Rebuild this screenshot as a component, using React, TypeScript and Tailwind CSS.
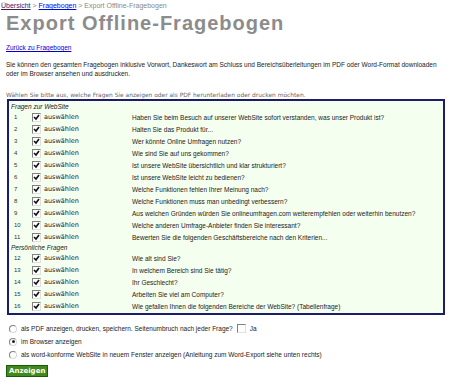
import React from "react";

const q1 = [
  "Haben Sie beim Besuch auf unserer WebSite sofort verstanden, was unser Produkt ist?",
  "Halten Sie das Produkt für...",
  "Wer könnte Online Umfragen nutzen?",
  "Wie sind Sie auf uns gekommen?",
  "Ist unsere WebSite übersichtlich und klar strukturiert?",
  "Ist unsere WebSite leicht zu bedienen?",
  "Welche Funktionen fehlen Ihrer Meinung nach?",
  "Welche Funktionen muss man unbedingt verbessern?",
  "Aus welchen Gründen würden Sie onlineumfragen.com weiterempfehlen oder weiterhin benutzen?",
  "Welche anderen Umfrage-Anbieter finden Sie interessant?",
  "Bewerten Sie die folgenden Geschäftsbereiche nach den Kriterien...",
];
const q2 = [
  "Wie alt sind Sie?",
  "In welchem Bereich sind Sie tätig?",
  "Ihr Geschlecht?",
  "Arbeiten Sie viel am Computer?",
  "Wie gefallen Ihnen die folgenden Bereiche der WebSite? (Tabellenfrage)",
];

function Check({ checked = true }: { checked?: boolean }) {
  return (
    <span className="inline-flex w-[9px] h-[9px] bg-white border border-t-[#808080] border-l-[#808080] border-b-[#e0e0e0] border-r-[#e0e0e0] items-center justify-center">
      {checked && (
        <svg width="7" height="7" viewBox="0 0 7 7">
          <path d="M1 3 L3 5 L6 1" stroke="#111" strokeWidth="1.6" fill="none" />
        </svg>
      )}
    </span>
  );
}

function Radio({ on = false }: { on?: boolean }) {
  return (
    <span className="inline-flex w-[8px] h-[8px] rounded-full bg-white border border-t-[#808080] border-l-[#808080] border-b-[#d8d8d8] border-r-[#d8d8d8] items-center justify-center">
      {on && <span className="w-[3px] h-[3px] rounded-full bg-[#222]" />}
    </span>
  );
}

function Row({ n, text }: { n: number; text: string }) {
  return (
    <div className="grid grid-cols-[23px_100px_1fr] items-center h-[12px]">
      <span className="pl-[5px] text-[6px] text-[#333]">{n}</span>
      <span className="flex items-center gap-[3px]">
        <Check />
        <span className="text-[6.5px] text-[#222]" style={{ fontFamily: '"DejaVu Sans", sans-serif' }}>auswählen</span>
      </span>
      <span className="text-[6.5px] text-[#222] whitespace-nowrap">{text}</span>
    </div>
  );
}

export default function App() {
  return (
    <div
      className="w-[450px] h-[386px] bg-white text-[6.5px] leading-[9px] text-[#222] px-[6px] overflow-hidden"
      style={{ fontFamily: '"Liberation Sans", Arial, sans-serif' }}
    >
      <div className="-ml-[5px] pt-[1px] text-[7px] text-[#888]">
        <span className="underline text-[#3a1a5b]">Übersicht</span> &gt;{" "}
        <span className="underline text-[#0000ee]">Fragebogen</span> &gt; Export Offline-Fragebogen
      </div>
      <div className="mt-[2px] text-[20px] leading-[22px] font-bold text-[#8c8c8c] tracking-[1px]">
        Export Offline-Fragebogen
      </div>
      <div className="mt-[9px] underline text-[#0000cc]">Zurück zu Fragebogen</div>
      <p className="mt-[8px]">
        Sie können den gesamten Fragebogen inklusive Vorwort, Dankeswort am Schluss und Bereichsüberleitungen im PDF oder Word-Format downloaden oder im Browser ansehen und ausdrucken.
      </p>
      <div
        className="mt-[13px] text-[5.9px] leading-[8px] text-[#666]"
        style={{ fontFamily: '"DejaVu Sans", sans-serif' }}
      >
        Wählen Sie bitte aus, welche Fragen Sie anzeigen oder als PDF herunterladen oder drucken möchten.
      </div>
      <div className="ml-[1px] w-[438px] border-2 border-[#1c1c6c] bg-[#f5ffef] pt-[1px] pb-[1px]">
        <div className="pl-[2px] italic text-[#222] h-[9px]">Fragen zur WebSite</div>
        {q1.map((t, i) => (
          <Row key={i} n={i + 1} text={t} />
        ))}
        <div className="pl-[2px] italic text-[#222] h-[9px]">Persönliche Fragen</div>
        {q2.map((t, i) => (
          <Row key={i} n={i + 12} text={t} />
        ))}
      </div>
      <div className="mt-[9px] flex flex-col gap-[4px] pl-[3px]">
        <div className="flex items-center gap-[4px] h-[9px]">
          <Radio />
          <span>als PDF anzeigen, drucken, speichern. Seitenumbruch nach jeder Frage?</span>
          <Check checked={false} />
          <span>Ja</span>
        </div>
        <div className="flex items-center gap-[4px] h-[9px]">
          <Radio on />
          <span>im Browser anzeigen</span>
        </div>
        <div className="flex items-center gap-[4px] h-[9px]">
          <Radio />
          <span>als word-konforme WebSite in neuem Fenster anzeigen (Anleitung zum Word-Export siehe unten rechts)</span>
        </div>
      </div>
      <div className="mt-[6px]">
        <span
          className="inline-block bg-[#3e8a1c] text-white font-bold text-[7px] leading-[10px] px-[2px] border border-[#1f5a0c]"
          style={{ fontFamily: '"DejaVu Sans", sans-serif' }}
        >
          Anzeigen
        </span>
      </div>
    </div>
  );
}
